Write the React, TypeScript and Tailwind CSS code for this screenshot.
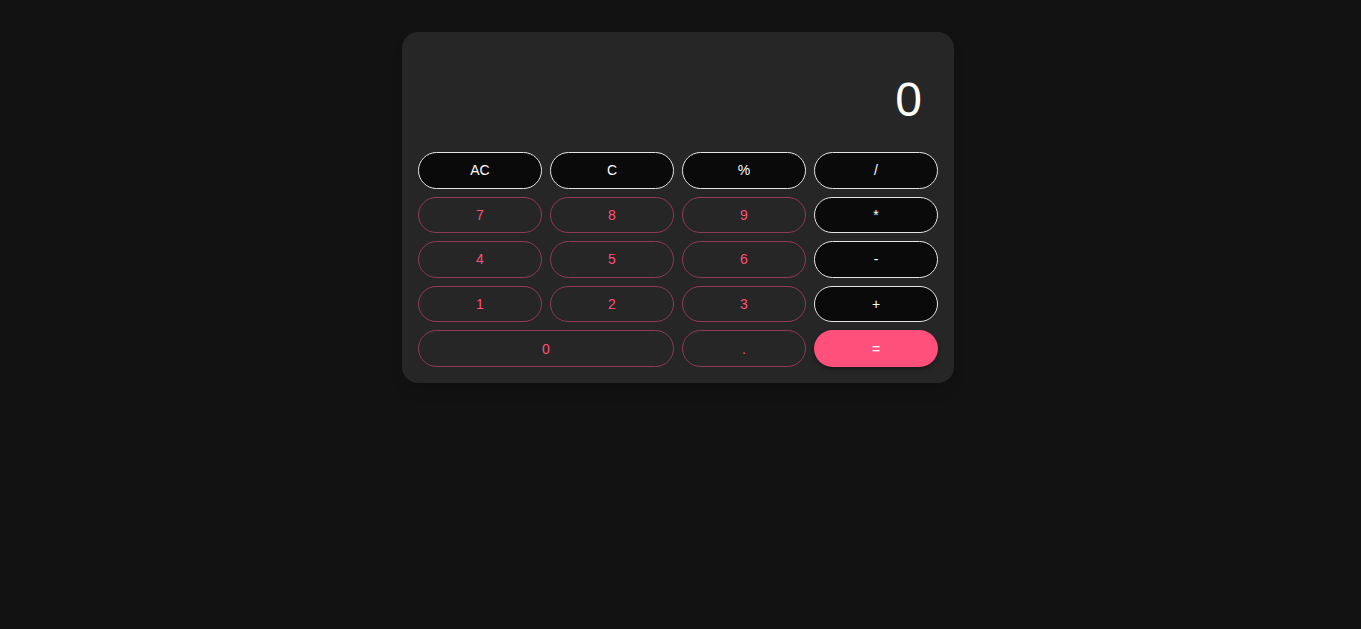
const rows: { label: string; kind: "op" | "num" | "eq"; span?: boolean }[][] = [
  [
    { label: "AC", kind: "op" },
    { label: "C", kind: "op" },
    { label: "%", kind: "op" },
    { label: "/", kind: "op" },
  ],
  [
    { label: "7", kind: "num" },
    { label: "8", kind: "num" },
    { label: "9", kind: "num" },
    { label: "*", kind: "op" },
  ],
  [
    { label: "4", kind: "num" },
    { label: "5", kind: "num" },
    { label: "6", kind: "num" },
    { label: "-", kind: "op" },
  ],
  [
    { label: "1", kind: "num" },
    { label: "2", kind: "num" },
    { label: "3", kind: "num" },
    { label: "+", kind: "op" },
  ],
  [
    { label: "0", kind: "num", span: true },
    { label: ".", kind: "num" },
    { label: "=", kind: "eq" },
  ],
];

const styles = {
  op: "bg-[#0a0a0a] border border-[#e5e5e5] text-white",
  num: "bg-transparent border border-[#8f3a54] text-[#ff4f7b]",
  eq: "bg-[#ff4f7b] text-white shadow-[0_2px_4px_rgba(0,0,0,0.4)]",
};

export default function App() {
  return (
    <div className="min-h-screen bg-[#121212] flex justify-center pt-8 pr-[5px] font-['Liberation_Sans',Arial,sans-serif]">
      <div className="w-[552px] h-fit bg-[#262626] rounded-2xl p-4 shadow-lg">
        <div className="h-24 mb-2 px-4 pb-5 flex items-end justify-end">
          <span className="text-5xl leading-none text-white">0</span>
        </div>
        <div className="grid grid-cols-4 gap-x-2 gap-y-2 auto-rows-[36.6px]">
          {rows.flat().map((b) => (
            <button
              key={b.label}
              className={`rounded-full text-sm ${styles[b.kind]} ${b.span ? "col-span-2" : ""}`}
            >
              {b.label}
            </button>
          ))}
        </div>
      </div>
    </div>
  );
}
